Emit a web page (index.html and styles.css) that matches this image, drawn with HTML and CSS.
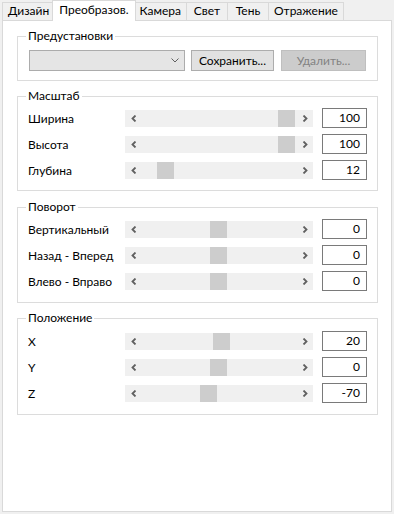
FILE: index.html
```html
<!DOCTYPE html>
<html lang="ru">
<head>
    <meta charset="UTF-8">
    <meta name="viewport" content="width=device-width, initial-scale=1.0">
    <title>Преобразования</title>
    <link rel="stylesheet" href="styles.css">
</head>
<body>
    <div class="tabs">
        <div class="tab">Дизайн</div>
        <div class="tab tab-active">Преобразов.</div>
        <div class="tab">Камера</div>
        <div class="tab">Свет</div>
        <div class="tab">Тень</div>
        <div class="tab">Отражение</div>
    </div>

    <div class="panel">
        <!-- Предустановки -->
        <fieldset class="group group-presets">
            <legend>Предустановки</legend>
            <div class="presets-row">
                <div class="combo">
                    <svg class="combo-arrow" width="8" height="5" viewBox="0 0 8 5">
                        <path d="M0.5 0.5 L4 4 L7.5 0.5" fill="none" stroke="#606060" stroke-width="1"/>
                    </svg>
                </div>
                <button class="btn btn-save">Сохранить...</button>
                <button class="btn btn-delete" disabled>Удалить...</button>
            </div>
        </fieldset>

        <!-- Масштаб -->
        <fieldset class="group group-scale">
            <legend>Масштаб</legend>
            <div class="rows">
                <div class="row">
                    <span class="row-label">Ширина</span>
                    <div class="scroll">
                        <span class="scroll-btn"><svg width="6" height="7" viewBox="0 0 6 7"><path d="M4.5 0.5 L1.5 3.5 L4.5 6.5" fill="none" stroke="#606060" stroke-width="1.8"/></svg></span>
                        <div class="trough"><div class="thumb" style="margin-left:136px"></div></div>
                        <span class="scroll-btn"><svg width="6" height="7" viewBox="0 0 6 7"><path d="M1.5 0.5 L4.5 3.5 L1.5 6.5" fill="none" stroke="#606060" stroke-width="1.8"/></svg></span>
                    </div>
                    <div class="num">100</div>
                </div>
                <div class="row">
                    <span class="row-label">Высота</span>
                    <div class="scroll">
                        <span class="scroll-btn"><svg width="6" height="7" viewBox="0 0 6 7"><path d="M4.5 0.5 L1.5 3.5 L4.5 6.5" fill="none" stroke="#606060" stroke-width="1.8"/></svg></span>
                        <div class="trough"><div class="thumb" style="margin-left:136px"></div></div>
                        <span class="scroll-btn"><svg width="6" height="7" viewBox="0 0 6 7"><path d="M1.5 0.5 L4.5 3.5 L1.5 6.5" fill="none" stroke="#606060" stroke-width="1.8"/></svg></span>
                    </div>
                    <div class="num">100</div>
                </div>
                <div class="row">
                    <span class="row-label">Глубина</span>
                    <div class="scroll">
                        <span class="scroll-btn"><svg width="6" height="7" viewBox="0 0 6 7"><path d="M4.5 0.5 L1.5 3.5 L4.5 6.5" fill="none" stroke="#606060" stroke-width="1.8"/></svg></span>
                        <div class="trough"><div class="thumb" style="margin-left:15px"></div></div>
                        <span class="scroll-btn"><svg width="6" height="7" viewBox="0 0 6 7"><path d="M1.5 0.5 L4.5 3.5 L1.5 6.5" fill="none" stroke="#606060" stroke-width="1.8"/></svg></span>
                    </div>
                    <div class="num">12</div>
                </div>
            </div>
        </fieldset>

        <!-- Поворот -->
        <fieldset class="group group-rotate">
            <legend>Поворот</legend>
            <div class="rows">
                <div class="row">
                    <span class="row-label">Вертикальный</span>
                    <div class="scroll">
                        <span class="scroll-btn"><svg width="6" height="7" viewBox="0 0 6 7"><path d="M4.5 0.5 L1.5 3.5 L4.5 6.5" fill="none" stroke="#606060" stroke-width="1.8"/></svg></span>
                        <div class="trough"><div class="thumb" style="margin-left:68px"></div></div>
                        <span class="scroll-btn"><svg width="6" height="7" viewBox="0 0 6 7"><path d="M1.5 0.5 L4.5 3.5 L1.5 6.5" fill="none" stroke="#606060" stroke-width="1.8"/></svg></span>
                    </div>
                    <div class="num">0</div>
                </div>
                <div class="row">
                    <span class="row-label">Назад - Вперед</span>
                    <div class="scroll">
                        <span class="scroll-btn"><svg width="6" height="7" viewBox="0 0 6 7"><path d="M4.5 0.5 L1.5 3.5 L4.5 6.5" fill="none" stroke="#606060" stroke-width="1.8"/></svg></span>
                        <div class="trough"><div class="thumb" style="margin-left:68px"></div></div>
                        <span class="scroll-btn"><svg width="6" height="7" viewBox="0 0 6 7"><path d="M1.5 0.5 L4.5 3.5 L1.5 6.5" fill="none" stroke="#606060" stroke-width="1.8"/></svg></span>
                    </div>
                    <div class="num">0</div>
                </div>
                <div class="row">
                    <span class="row-label">Влево - Вправо</span>
                    <div class="scroll">
                        <span class="scroll-btn"><svg width="6" height="7" viewBox="0 0 6 7"><path d="M4.5 0.5 L1.5 3.5 L4.5 6.5" fill="none" stroke="#606060" stroke-width="1.8"/></svg></span>
                        <div class="trough"><div class="thumb" style="margin-left:68px"></div></div>
                        <span class="scroll-btn"><svg width="6" height="7" viewBox="0 0 6 7"><path d="M1.5 0.5 L4.5 3.5 L1.5 6.5" fill="none" stroke="#606060" stroke-width="1.8"/></svg></span>
                    </div>
                    <div class="num">0</div>
                </div>
            </div>
        </fieldset>

        <!-- Положение -->
        <fieldset class="group group-position">
            <legend>Положение</legend>
            <div class="rows">
                <div class="row">
                    <span class="row-label">X</span>
                    <div class="scroll">
                        <span class="scroll-btn"><svg width="6" height="7" viewBox="0 0 6 7"><path d="M4.5 0.5 L1.5 3.5 L4.5 6.5" fill="none" stroke="#606060" stroke-width="1.8"/></svg></span>
                        <div class="trough"><div class="thumb" style="margin-left:71px"></div></div>
                        <span class="scroll-btn"><svg width="6" height="7" viewBox="0 0 6 7"><path d="M1.5 0.5 L4.5 3.5 L1.5 6.5" fill="none" stroke="#606060" stroke-width="1.8"/></svg></span>
                    </div>
                    <div class="num">20</div>
                </div>
                <div class="row">
                    <span class="row-label">Y</span>
                    <div class="scroll">
                        <span class="scroll-btn"><svg width="6" height="7" viewBox="0 0 6 7"><path d="M4.5 0.5 L1.5 3.5 L4.5 6.5" fill="none" stroke="#606060" stroke-width="1.8"/></svg></span>
                        <div class="trough"><div class="thumb" style="margin-left:68px"></div></div>
                        <span class="scroll-btn"><svg width="6" height="7" viewBox="0 0 6 7"><path d="M1.5 0.5 L4.5 3.5 L1.5 6.5" fill="none" stroke="#606060" stroke-width="1.8"/></svg></span>
                    </div>
                    <div class="num">0</div>
                </div>
                <div class="row">
                    <span class="row-label">Z</span>
                    <div class="scroll">
                        <span class="scroll-btn"><svg width="6" height="7" viewBox="0 0 6 7"><path d="M4.5 0.5 L1.5 3.5 L4.5 6.5" fill="none" stroke="#606060" stroke-width="1.8"/></svg></span>
                        <div class="trough"><div class="thumb" style="margin-left:58px"></div></div>
                        <span class="scroll-btn"><svg width="6" height="7" viewBox="0 0 6 7"><path d="M1.5 0.5 L4.5 3.5 L1.5 6.5" fill="none" stroke="#606060" stroke-width="1.8"/></svg></span>
                    </div>
                    <div class="num">-70</div>
                </div>
            </div>
        </fieldset>
    </div>
</body>
</html>
```

FILE: styles.css
```css
* {
    box-sizing: border-box;
    margin: 0;
    padding: 0;
}

body {
    background-color: #f0f0f0;
    font-family: 'Lato', 'Noto Sans', sans-serif;
    font-size: 12px;
    color: #000;
    width: 394px;
    height: 514px;
    overflow: hidden;
}

/* Вкладки */
.tabs {
    display: flex;
    align-items: flex-end;
    height: 20px;
    padding-left: 2px;
}

.tab {
    min-width: 42px;
    height: 18px;
    line-height: 16px;
    padding: 0 5px;
    border: 1px solid #d9d9d9;
    border-bottom: none;
    margin-right: -1px;
    background-color: #f0f0f0;
    text-align: center;
    white-space: nowrap;
}

.tab-active {
    position: relative;
    z-index: 1;
    height: 21px;
    line-height: 18px;
    margin: 0 -2px -1px -2px;
    padding: 0 6px;
    background-color: #fff;
}

.panel {
    margin: 0 2px;
    height: 492px;
    background-color: #fff;
    border: 1px solid #d9d9d9;
}

/* Группы */
.group {
    width: 361px;
    margin: 7px 0 0 14px;
    min-width: 0;
    border: 1px solid #dcdcdc;
    padding: 4px 10px 10px;
}

.group legend {
    line-height: 16px;
    padding: 0 2px;
    margin-left: -2px;
}

.group-presets {
    padding-top: 6px;
    padding-bottom: 9px;
}

.group-rotate {
    margin-top: 8px;
    padding-bottom: 11px;
}

.group-position {
    margin-top: 7px;
    padding-top: 5px;
    padding-bottom: 11px;
}

.presets-row {
    display: flex;
    align-items: center;
}

.combo {
    width: 156px;
    height: 21px;
    margin-left: 1px;
    background-color: #e5e5e5;
    border: 1px solid #acacac;
    display: flex;
    align-items: center;
    justify-content: flex-end;
    padding-right: 5px;
}

.btn {
    height: 21px;
    font-family: inherit;
    font-size: 12px;
    border: 1px solid #adadad;
    background-color: #e1e1e1;
    color: #000;
}

.btn-save {
    width: 83px;
    margin-left: 6px;
}

.btn-delete {
    width: 85px;
    margin-left: 7px;
    background-color: #cccccc;
    border-color: #bfbfbf;
    color: #838383;
}

/* Строки с ползунками */
.rows {
    display: flex;
    flex-direction: column;
    gap: 6px;
}

.row {
    display: flex;
    align-items: center;
    height: 20px;
}

.row-label {
    width: 97px;
    white-space: nowrap;
}

.scroll {
    width: 188px;
    height: 17px;
    display: flex;
    background-color: #f0f0f0;
}

.scroll-btn {
    width: 17px;
    display: flex;
    align-items: center;
    justify-content: center;
}

.trough {
    flex: 1;
    display: flex;
}

.thumb {
    width: 17px;
    background-color: #cdcdcd;
}

.num {
    width: 45px;
    height: 20px;
    margin-left: 9px;
    border: 1px solid #7a7a7a;
    background-color: #fff;
    text-align: right;
    padding-right: 6px;
    line-height: 18px;
}
```
